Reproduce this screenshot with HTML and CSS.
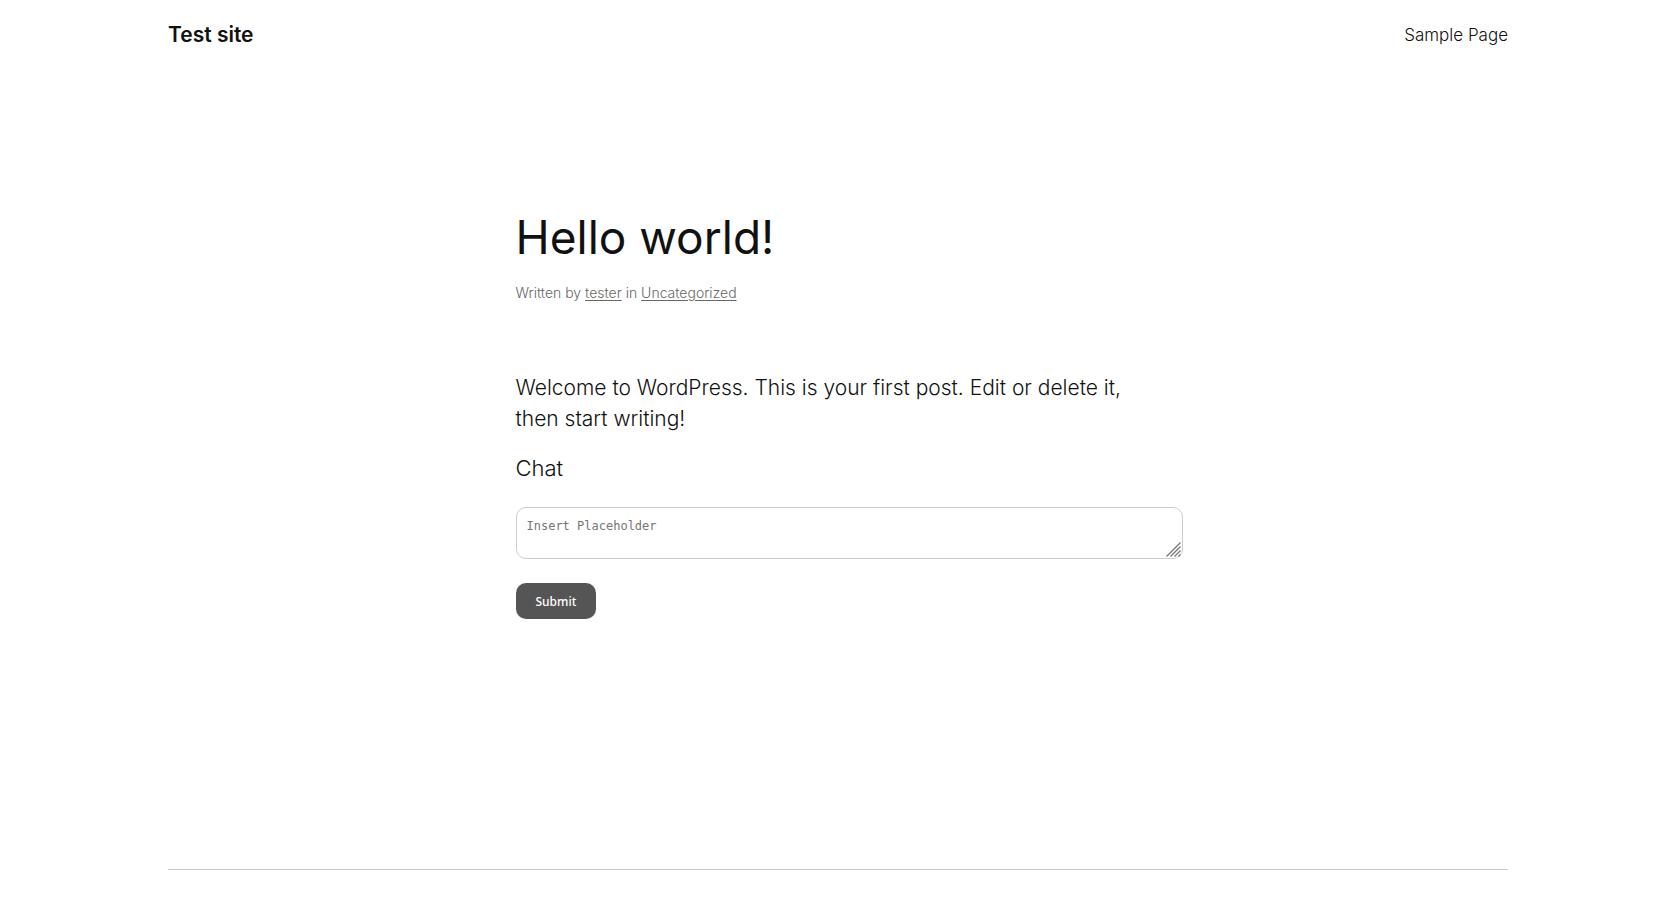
FILE: index.html
```html
<!DOCTYPE html>
<html lang="en">
<head>
<meta charset="utf-8">
<meta name="viewport" content="width=device-width, initial-scale=1">
<title>Hello world! – Test site</title>
<link rel="stylesheet" href="styles.css">
</head>
<body class="page">
<header class="site-header">
  <a class="site-title" href="#">Test site</a>
  <nav class="site-nav"><a class="nav-link" href="#">Sample Page</a></nav>
</header>
<main class="post">
  <h1 class="post-title">Hello world!</h1>
  <p class="post-meta">Written by <a class="meta-link" href="#">tester</a> in <a class="meta-link" href="#">Uncategorized</a></p>
  <p class="post-text">Welcome to WordPress. This is your first post. Edit or delete it, then start writing!</p>
  <form class="chat">
    <label class="chat-label" for="message">Chat</label>
    <div class="chat-field">
      <textarea class="chat-input" id="message" placeholder="Insert Placeholder"></textarea>
      <svg class="chat-grip" viewBox="0 0 15 15" aria-hidden="true"><path d="M0.5 14.5 14.5 0.5M4.5 14.5 14.5 4.5M8.5 14.5 14.5 8.5M12.5 14.5 14.5 12.5"/></svg>
    </div>
    <button class="chat-submit" type="button">Submit</button>
  </form>
</main>
<hr class="divider">
</body>
</html>
```
FILE: styles.css
```css
.page {
  margin: 0;
  padding: 0 0 0 6px;
  background: #fff;
  color: #111;
  font-family: Inter, "Open Sans", sans-serif;
  font-weight: 300;
}
.site-header {
  display: flex;
  align-items: center;
  justify-content: space-between;
  max-width: 1340px;
  margin: 0 auto;
  padding: 20px 0;
  line-height: 30px;
}
.site-title {
  color: #111;
  font-size: 21px;
  font-weight: 600;
  text-decoration: none;
}
.nav-link {
  color: #111;
  font-size: 17px;
  text-decoration: none;
}
.post {
  max-width: 645px;
  margin: 0 auto;
  padding-top: 138px;
}
.post-title {
  margin: 0;
  font-size: 46px;
  font-weight: 400;
  line-height: 58px;
}
.post-meta {
  margin: 16px 0 0;
  color: #686868;
  font-size: 14px;
  line-height: 22px;
}
.meta-link {
  color: #686868;
  text-underline-offset: 2px;
}
.post-text {
  margin: 68px 0 0;
  font-size: 21px;
  line-height: 31px;
}
.chat {
  display: flex;
  flex-direction: column;
  align-items: flex-start;
  margin-top: 19px;
}
.chat-label {
  font-size: 22px;
  line-height: 31px;
}
.chat-field {
  position: relative;
  width: calc(100% + 22px);
  margin-top: 23px;
}
.chat-input {
  display: block;
  box-sizing: border-box;
  width: 100%;
  height: 52px;
  padding: 10px;
  border: 1px solid #ccc;
  border-radius: 10px;
  background: #fff;
  color: #111;
  font: 12px/16px "DejaVu Sans Mono", monospace;
  resize: none;
}
.chat-input::placeholder {
  color: #757575;
}
.chat-grip {
  position: absolute;
  right: 2px;
  bottom: 2px;
  width: 15px;
  height: 15px;
  fill: none;
  stroke: #777;
  stroke-width: 1.3;
  pointer-events: none;
}
.chat-submit {
  height: 36px;
  margin-top: 24px;
  padding: 0 20px;
  border: 0;
  border-radius: 10px;
  background: #555;
  color: #fff;
  font: 500 12px "Noto Sans", sans-serif;
}
.divider {
  max-width: 1340px;
  height: 1px;
  margin: 250px auto 38px;
  border: 0;
  background: #ccc;
}
```
